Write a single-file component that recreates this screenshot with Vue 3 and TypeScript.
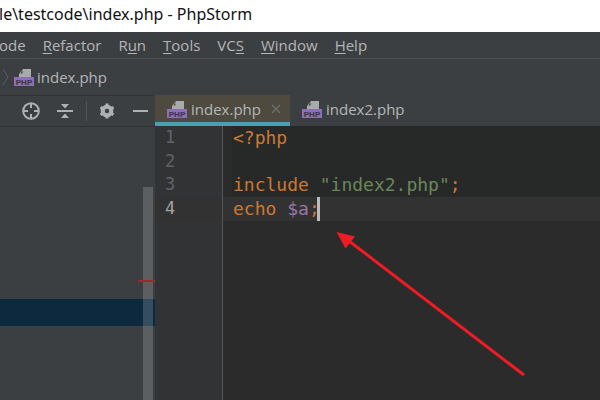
<script setup lang="ts">
const menus = [
  { pre: 'ode', u: '', post: '' },
  { pre: '', u: 'R', post: 'efactor' },
  { pre: 'R', u: 'u', post: 'n' },
  { pre: '', u: 'T', post: 'ools' },
  { pre: 'VC', u: 'S', post: '' },
  { pre: '', u: 'W', post: 'indow' },
  { pre: '', u: 'H', post: 'elp' },
]
</script>

<template>
  <div class="app">
    <div class="title">le\testcode\index.php - PhpStorm</div>
    <div class="menu">
      <span v-for="m in menus" :key="m.pre + m.post" class="menu-item">{{ m.pre }}<u>{{ m.u }}</u>{{ m.post }}</span>
    </div>
    <div class="crumb">
      <svg class="chev" width="8" height="20" viewBox="0 0 8 20"><path d="M1 2 L6 10 L1 18" fill="none" stroke="#5a5d5f" stroke-width="1" /></svg>
      <svg class="php" width="20" height="20" viewBox="0 0 20 20"><path d="M5 7 L9 2 H17 V11 H5 Z" fill="#a9abab" /><path d="M8.5 3 L6.5 6.5 H8.5 Z" fill="#3c3f41" /><rect x="0" y="10" width="20" height="9" fill="#8c6fb5" /><text x="10" y="17.6" class="php-t" text-anchor="middle">PHP</text></svg>
      <span>index.php</span>
    </div>
    <div class="main">
      <aside class="side">
        <div class="tools">
          <svg class="t1" width="20" height="20" viewBox="0 0 20 20" fill="none" stroke="#aeb0b2" stroke-width="2"><circle cx="10" cy="10" r="7.8" /><path d="M10 2 V7 M10 13 V18 M2 10 H7 M13 10 H18" /></svg>
          <svg class="t2" width="16" height="16" viewBox="0 0 16 16" fill="#aeb0b2"><path d="M4 1 H12 L8 5.5 Z M4 15 H12 L8 10.5 Z" /><rect x="0" y="7" width="16" height="2" /></svg>
          <i class="sep"></i>
          <svg class="t3" width="16" height="16" viewBox="0 0 16 16"><circle cx="8" cy="8" r="4.6" fill="none" stroke="#aeb0b2" stroke-width="3.4" /><path d="M8 0.5 V15.5 M1.5 4.2 L14.5 11.8 M14.5 4.2 L1.5 11.8" stroke="#aeb0b2" stroke-width="3" /><circle cx="8" cy="8" r="2.2" fill="#3c3f41" /></svg>
          <i class="dash"></i>
        </div>
        <div class="tree">
          <div class="selected"></div>
          <div class="thumb"></div>
          <div class="mark"></div>
        </div>
      </aside>
      <section class="editor">
        <div class="tabs">
          <div class="tab active">
            <svg width="20" height="20" viewBox="0 0 20 20"><path d="M5 7 L9 2 H17 V11 H5 Z" fill="#a9abab" /><path d="M8.5 3 L6.5 6.5 H8.5 Z" fill="#4f4b41" /><rect x="0" y="10" width="20" height="9" fill="#8c6fb5" /><text x="10" y="17.6" class="php-t" text-anchor="middle">PHP</text></svg>
            <span>index.php</span>
            <svg class="x" width="10" height="10" viewBox="0 0 10 10"><path d="M1 1 L9 9 M9 1 L1 9" stroke="#6f7072" stroke-width="1.2" /></svg>
          </div>
          <div class="tab">
            <svg width="20" height="20" viewBox="0 0 20 20"><path d="M5 7 L9 2 H17 V11 H5 Z" fill="#a9abab" /><path d="M8.5 3 L6.5 6.5 H8.5 Z" fill="#3c3f41" /><rect x="0" y="10" width="20" height="9" fill="#8c6fb5" /><text x="10" y="17.6" class="php-t" text-anchor="middle">PHP</text></svg>
            <span>index2.php</span>
          </div>
        </div>
        <div class="code">
          <div class="row"><span class="num">1</span><span class="line dark"><b class="kw">&lt;?php</b></span></div>
          <div class="row"><span class="num">2</span><span class="line dark"></span></div>
          <div class="row"><span class="num">3</span><span class="line dark"><b class="kw">include</b> <b class="str">"index2.php"</b><b class="kw">;</b></span></div>
          <div class="row cur"><span class="num">4</span><span class="line"><b class="kw">echo</b> <b class="var">$a</b><b class="kw">;</b><i class="caret"></i></span></div>
          <div class="rest"><span class="num"></span><span class="line"></span></div>
        </div>
      </section>
    </div>
    <svg class="arrow" width="600" height="400" viewBox="0 0 600 400">
      <path d="M524 375 L349 241" stroke="#ee1c25" stroke-width="3" fill="none" />
      <path d="M336.5 232 L355 236.5 L345.5 248.5 Z" fill="#ee1c25" />
    </svg>
  </div>
</template>

<style>
html, body { margin: 0; padding: 0; background: #fff; }
</style>

<style scoped>
.app { position: relative; width: 600px; height: 400px; overflow: hidden; display: flex; flex-direction: column; font-family: "Open Sans", "Noto Sans", sans-serif; background: #3c3f41; }
.title { height: 32px; background: #fff; color: #111; font: 16px/28px "Noto Sans", sans-serif; white-space: nowrap; text-indent: -1px; flex: none; }
.menu { height: 26px; flex: none; display: flex; gap: 17px; margin-left: -1px; color: #b4b6b8; font-size: 15px; line-height: 26px; border-bottom: 1px solid #4f5254; white-space: nowrap; }
.menu u { text-underline-offset: 2px; }
.crumb { height: 36px; flex: none; display: flex; align-items: center; color: #b4b6b8; font-size: 15px; border-bottom: 1px solid #323232; box-sizing: content-box; }
.chev { margin-left: 2px; margin-right: 4px; }
.php { margin-right: 3px; }
.php-t { font: bold 8px "Liberation Sans", sans-serif; fill: #38324a; }
.main { flex: 1; display: flex; min-height: 0; }
.side { width: 155px; flex: none; display: flex; flex-direction: column; }
.tools { height: 30px; flex: none; display: flex; align-items: center; border-bottom: 1px solid #323232; }
.t1 { margin-left: 21px; }
.t2 { margin-left: 16px; }
.sep { width: 1px; height: 20px; background: #515355; margin-left: 13px; }
.t3 { margin-left: 12px; }
.dash { width: 15px; height: 2px; background: #aeb0b2; margin-left: 18px; }
.tree { flex: 1; position: relative; }
.selected { position: absolute; left: 0; right: 0; top: 172px; height: 27px; background: #0d293e; }
.thumb { position: absolute; left: 143px; width: 10px; top: 60px; bottom: 0; background: rgba(255, 255, 255, 0.17); }
.mark { position: absolute; left: 138px; right: 0; top: 153px; height: 2px; background: #9e2a2b; }
.editor { flex: 1; display: flex; flex-direction: column; min-width: 0; background: #2b2b2b; }
.tabs { height: 31px; flex: none; display: flex; background: #3c3f41; color: #b4b6b8; font-size: 15px; margin-top: -1px; }
.tab { display: flex; align-items: center; gap: 4px; padding: 0 8px 3px 12px; box-sizing: border-box; }
.tab.active { width: 135px; background: #4e4a40; border-bottom: 4px solid #4a9fb5; padding-bottom: 0; }
.tab .x { margin-left: 6px; }
.code { flex: 1; display: flex; flex-direction: column; font: 18px/23.7px "DejaVu Sans Mono", monospace; color: #a9b7c6; }
.code b { font-weight: normal; }
.kw { color: #cc7832; }
.str { color: #6a8759; }
.var { color: #9876aa; }
.row { display: flex; height: 23.7px; }
.rest { flex: 1; display: flex; }
.num { width: 67px; flex: none; background: #313335; border-right: 1px solid #555; color: #606366; font-size: 17px; padding-left: 10px; box-sizing: content-box; width: 57px; }
.cur { background: #323232; }
.cur .num { background: #323232; color: #a4a3a3; }
.line { flex: 1; padding-left: 10px; white-space: pre; position: relative; }
.dark { background: #272928; margin-left: 9px; padding-left: 1px; }
.caret { position: absolute; left: 94px; top: 0; width: 3px; height: 100%; background: #bbb; }
.arrow { position: absolute; left: 0; top: 0; pointer-events: none; }
</style>
